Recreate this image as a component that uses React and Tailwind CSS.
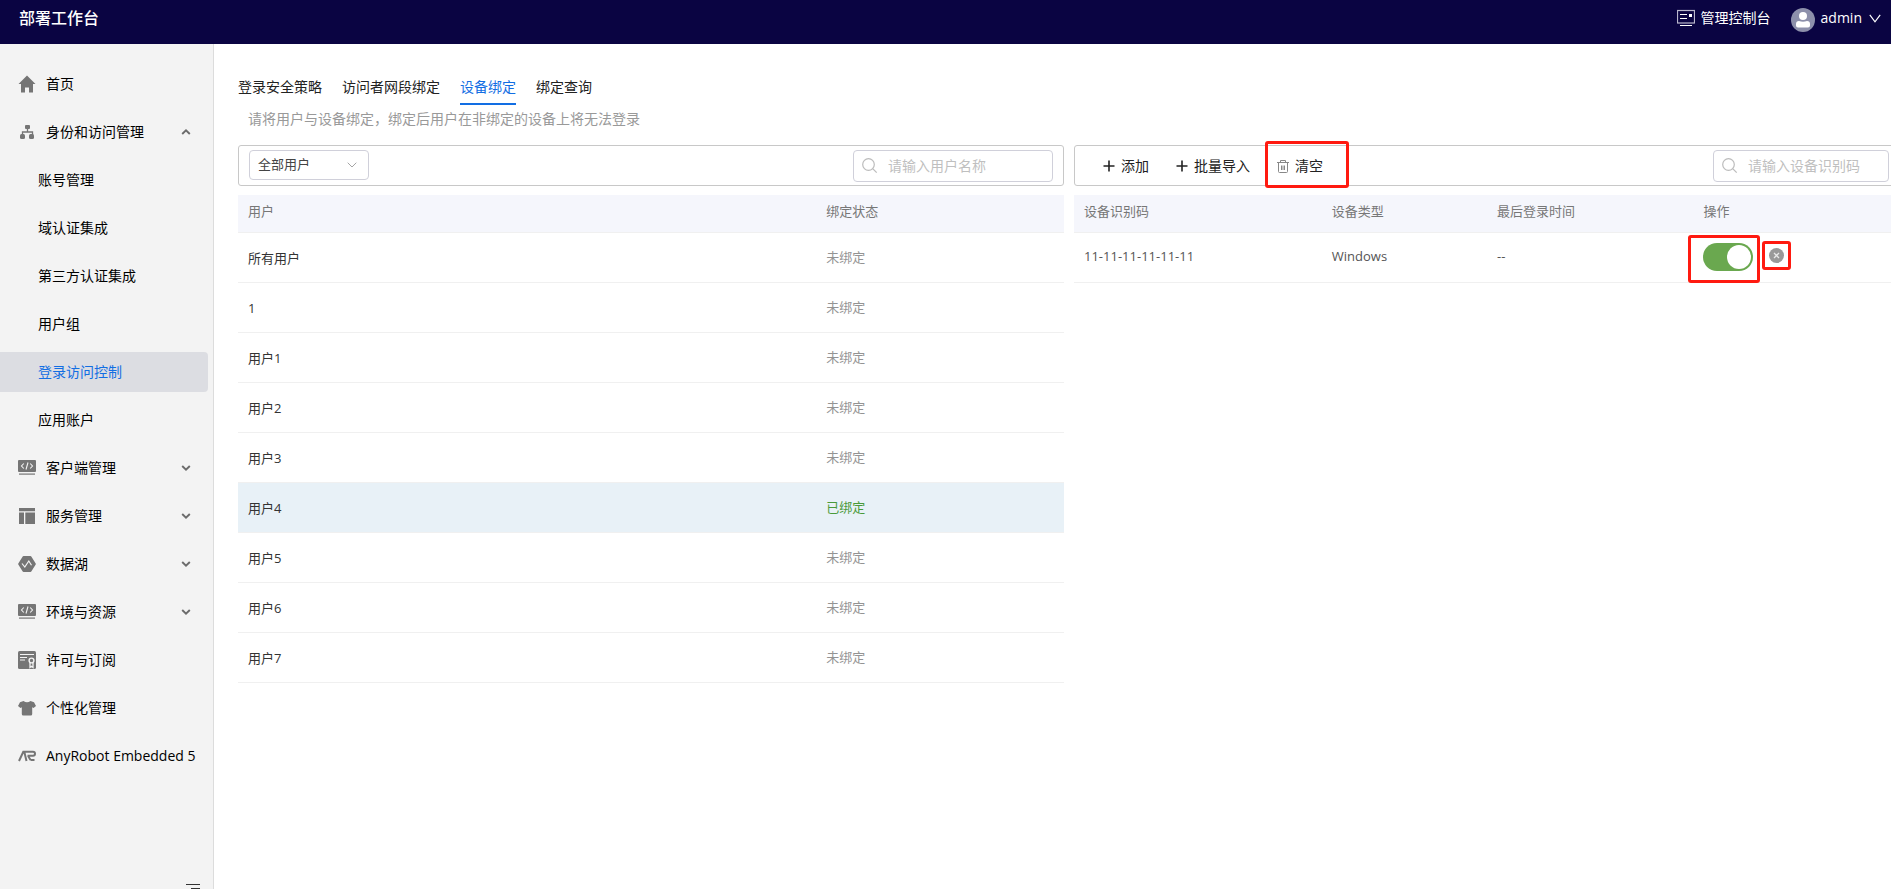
import React, { useState } from "react";

const HomeIcon = () => (
  <svg viewBox="0 0 18 18" className="size-[18px]" fill="currentColor">
    <path d="M9 0.5 0.5 9H3v8.500h4v-5h4v5h4V9h2.500z" />
  </svg>
);

const OrgIcon = () => (
  <svg viewBox="0 0 18 18" className="size-[18px]" fill="currentColor">
    <rect x="7" y="2" width="5" height="4" rx="1" />
    <rect x="2" y="11" width="5" height="5" rx="1.500" />
    <rect x="11" y="11" width="5" height="5" rx="1.500" />
    <path d="M9.500 5v4M4.500 12V9h10v3" fill="none" stroke="currentColor" strokeWidth="1.300" />
  </svg>
);

const CodeIcon = () => (
  <svg viewBox="0 0 18 18" className="size-[18px]">
    <rect x="0" y="1" width="18" height="12" rx="1" fill="currentColor" />
    <rect x="1" y="14.500" width="16" height="1.200" fill="currentColor" />
    <path d="M5.800 4.500 3.500 7l2.300 2.500M12.200 4.500 14.500 7l-2.300 2.500M10 3.500 8 10.500" fill="none" stroke="#f3f3f3" strokeWidth="1.100" />
  </svg>
);

const LayoutIcon = () => (
  <svg viewBox="0 0 18 18" className="size-[18px]" fill="currentColor">
    <path d="M1 1h16v3.200H1zM1 5.500h5V17H1zM7.300 5.500H17V17H7.300z" />
  </svg>
);

const LakeIcon = () => (
  <svg viewBox="0 0 18 18" className="size-[18px]">
    <path d="M5.500 1h7a1 1 0 0 1 .8.500L17.700 8.500a1 1 0 0 1 0 1L13.300 16.500a1 1 0 0 1-.8.500h-7a1 1 0 0 1-.8-.5L.3 9.500a1 1 0 0 1 0-1L4.700 1.500A1 1 0 0 1 5.500 1z" fill="currentColor" />
    <path d="M4 8.500 6.800 12l4-6 2.700 4.200" fill="none" stroke="#f3f3f3" strokeWidth="1.200" />
  </svg>
);

const LicenseIcon = () => (
  <svg viewBox="0 0 18 18" className="size-[18px]">
    <rect width="18" height="18" rx="1.500" fill="currentColor" />
    <path d="M2 3.500h14M2 6.500h7M2 9h5" stroke="#f3f3f3" strokeWidth="1.200" />
    <circle cx="13.500" cy="9.500" r="2.400" fill="none" stroke="#f3f3f3" strokeWidth="1.400" />
    <path d="M12 11.500v5l1.500-1.200 1.500 1.200v-5" fill="none" stroke="#f3f3f3" strokeWidth="1.300" />
  </svg>
);

const ShirtIcon = () => (
  <svg viewBox="0 0 18 18" className="size-[18px]" fill="currentColor">
    <path d="M5.500 2q3.500 2.600 7 0L16 3.200 18 7l-2.500 2-1.300-.8V15q0 1.500-1.500 1.500H5.300Q3.800 16.500 3.800 15V8.200L2.500 9 0 7l2-3.800z" />
  </svg>
);

const RobotIcon = () => (
  <svg viewBox="0 0 18 18" className="size-[18px]" fill="none" stroke="currentColor" strokeWidth="2">
    <path d="M1 14 5.300 4.800h1L8.500 14M7 4.800h8q2 0 2 2t-2 2h-5.500M12.500 13h4M10 8.800l2.500 4.200" />
  </svg>
);

const Chevron = ({ up }) => (
  <svg viewBox="0 0 10 8" className="w-[10px] h-2" fill="none" stroke="#6b6b6b" strokeWidth="1.900">
    <path d={up ? "M1.200 6 5 2.300 8.800 6" : "M1.200 2 5 5.700 8.800 2"} />
  </svg>
);

const SearchIcon = () => (
  <svg viewBox="0 0 16 16" className="size-4 shrink-0" fill="none" stroke="#bcbcbc" strokeWidth="1.200">
    <circle cx="6.500" cy="6.500" r="5.800" />
    <path d="m10.700 10.700 4 4" />
  </svg>
);

const PlusIcon = () => (
  <svg viewBox="0 0 12 12" className="size-3" fill="none" stroke="#222" strokeWidth="1.600">
    <path d="M6 .5v11M.5 6h11" />
  </svg>
);

const TrashIcon = () => (
  <svg viewBox="0 0 12 14" className="w-3 h-[14px]" fill="none" stroke="#888" strokeWidth="1">
    <path d="M0 3.500h12M3.500 3V1.500h5V3M1.500 4v8.500q0 1 1 1h7q1 0 1-1V4M4.500 6.500v4.500M6 6.500v4.500M7.500 6.500v4.500" />
  </svg>
);

const menu = [
  { label: "首页", icon: HomeIcon },
  {
    label: "身份和访问管理",
    icon: OrgIcon,
    open: true,
    children: ["账号管理", "域认证集成", "第三方认证集成", "用户组", "登录访问控制", "应用账户"],
  },
  { label: "客户端管理", icon: CodeIcon, children: [] },
  { label: "服务管理", icon: LayoutIcon, children: [] },
  { label: "数据湖", icon: LakeIcon, children: [] },
  { label: "环境与资源", icon: CodeIcon, children: [] },
  { label: "许可与订阅", icon: LicenseIcon },
  { label: "个性化管理", icon: ShirtIcon },
  { label: "AnyRobot Embedded 5", icon: RobotIcon },
];

const tabs = ["登录安全策略", "访问者网段绑定", "设备绑定", "绑定查询"];

const users = [
  { name: "所有用户", bound: false },
  { name: "1", bound: false },
  { name: "用户1", bound: false },
  { name: "用户2", bound: false },
  { name: "用户3", bound: false },
  { name: "用户4", bound: true },
  { name: "用户5", bound: false },
  { name: "用户6", bound: false },
  { name: "用户7", bound: false },
];

function Header() {
  return (
    <header className="flex h-11 shrink-0 items-center justify-between bg-[#0a0442] pl-[19px] pr-[10px] text-white">
      <h1 className="pb-2 text-base font-medium leading-6">部署工作台</h1>
      <div className="flex items-center pb-1 text-sm">
        <a href="#console" className="flex items-center gap-[6px] pb-1 leading-6">
          <svg viewBox="0 0 18 18" className="size-[18px]" fill="none" stroke="currentColor">
            <rect x=".5" y="1.500" width="17" height="12.500" stroke="#b9b7cc" strokeWidth="1.200" />
            <path d="M3 5.500h7M3 9.500h7M3 16.500h12" strokeWidth="1.200" />
            <rect x="12" y="5" width="3" height="3" fill="currentColor" stroke="none" />
          </svg>
          管理控制台
        </a>
        <button type="button" className="ml-5 flex items-center gap-[6px]">
          <svg viewBox="0 0 24 24" className="size-6">
            <circle cx="12" cy="12" r="12" fill="#8d90ab" />
            <circle cx="12" cy="8" r="4" fill="#fff" />
            <path d="M5 16q0-3 3-3 4 1.500 8 0 3 0 3 3v1.500q0 2-2 2H7q-2 0-2-2z" fill="#fff" />
          </svg>
          <span className="flex items-center gap-[7px] pb-1 leading-6">
            admin
            <svg viewBox="0 0 12 9" className="h-[9px] w-3" fill="none" stroke="currentColor" strokeWidth="1.200">
              <path d="M.8 .8 6 7.800 11.200 .8" />
            </svg>
          </span>
        </button>
      </div>
    </header>
  );
}

function Sidebar() {
  const [active, setActive] = useState("登录访问控制");

  return (
    <aside className="flex w-[214px] shrink-0 flex-col border-r border-[#dcdcdc] bg-[#f3f3f3]">
      <nav className="flex min-h-0 flex-1 flex-col gap-2 pr-[5px] pt-5 text-sm text-black">
        {menu.map((item) => (
          <React.Fragment key={item.label}>
            <button type="button" className="flex h-10 shrink-0 items-center gap-[10px] pl-[18px] pr-[17px] text-left">
              <span className="text-[#757575]">
                <item.icon />
              </span>
              <span className="flex-1 whitespace-nowrap">{item.label}</span>
              {item.children && <Chevron up={item.open} />}
            </button>
            {item.open &&
              item.children.map((child) => (
                <a
                  key={child}
                  href="#menu"
                  onClick={() => setActive(child)}
                  className={`flex h-10 shrink-0 items-center rounded-r-sm pl-[38px] ${
                    child === active ? "bg-[#dcdde2] text-[#126ee3]" : ""
                  }`}
                >
                  {child}
                </a>
              ))}
          </React.Fragment>
        ))}
      </nav>
      <button type="button" aria-label="收起菜单" className="mr-3 flex h-[5px] items-start justify-end overflow-hidden">
        <svg viewBox="0 0 16 14" className="h-[14px] w-4 shrink-0" stroke="#333" strokeWidth="1">
          <path d="M1 .5h14M6 4.500h9M6 8.500h9M1 12.500h14" />
        </svg>
      </button>
    </aside>
  );
}

function SearchBox({ placeholder, className }) {
  return (
    <label className={`flex h-8 items-center gap-[10px] rounded border border-[#d0d0da] px-2 ${className}`}>
      <SearchIcon />
      <input
        type="text"
        aria-label={placeholder}
        placeholder={placeholder}
        className="min-w-0 flex-1 text-sm outline-none placeholder:text-[#bfbfbf]"
      />
    </label>
  );
}

function UserPanel() {
  const [selected, setSelected] = useState("用户4");

  return (
    <section className="w-1/2 shrink-0">
      <div className="flex h-[41px] items-start justify-between rounded-[3px] border border-[#c8c8c8] px-[10px] pt-1">
        <div className="relative">
          <select
            aria-label="用户范围"
            className="h-[30px] w-[120px] appearance-none rounded border border-[#d0d0da] bg-white pl-2 text-[13px] text-[#444] outline-none"
          >
            <option>全部用户</option>
          </select>
          <svg viewBox="0 0 10 6" className="pointer-events-none absolute right-3 top-3 h-[6px] w-[10px]" fill="none" stroke="#a5a5a5">
            <path d="M.7 .7 5 5 9.300 .7" />
          </svg>
        </div>
        <SearchBox placeholder="请输入用户名称" className="w-[200px]" />
      </div>

      <table className="mt-[9px] w-full table-fixed text-left text-[13px]">
        <thead className="bg-[#f5f6fc] text-[#777]">
          <tr className="h-[37px] border-b border-[#f0f0f0]">
            <th className="w-[70%] px-[10px] pb-1 font-normal">用户</th>
            <th className="w-[30%] px-[10px] pb-1 font-normal">绑定状态</th>
          </tr>
        </thead>
        <tbody>
          {users.map((user) => (
            <tr
              key={user.name}
              onClick={() => setSelected(user.name)}
              className={`h-[50px] border-b border-[#f0f0f0] ${user.name === selected ? "bg-[#e8f1f7]" : ""}`}
            >
              <td className="px-[10px] pt-[3px] text-[#333]">{user.name}</td>
              <td className={`px-[10px] pt-px ${user.bound ? "text-[#4a9a3a]" : "text-[#949494]"}`}>
                {user.bound ? "已绑定" : "未绑定"}
              </td>
            </tr>
          ))}
        </tbody>
      </table>
    </section>
  );
}

function DevicePanel() {
  const [enabled, setEnabled] = useState(true);

  return (
    <section className="ml-[10px] w-1/2 shrink-0">
      <div className="flex h-[41px] items-start justify-between rounded-[3px] border border-[#c8c8c8] pl-7 pr-[10px] pt-1">
        <div className="flex h-8 items-center text-sm text-[#222]">
          <button type="button" className="flex items-center gap-[6px]">
            <PlusIcon />
            添加
          </button>
          <button type="button" className="ml-[27px] flex items-center gap-[6px]">
            <PlusIcon />
            批量导入
          </button>
          <button type="button" className="relative ml-[27px] flex items-center gap-[6px]">
            <TrashIcon />
            清空
            <span className="absolute -bottom-3 -left-3 -right-[26px] -top-[15px] rounded-[3px] border-3 border-[#ff1a10]"></span>
          </button>
        </div>
        <SearchBox placeholder="请输入设备识别码" className="w-[176px]" />
      </div>

      <table className="mt-[9px] w-full table-fixed text-left text-[13px]">
        <thead className="bg-[#f5f6fc] text-[#777]">
          <tr className="h-[37px] border-b border-[#f0f0f0]">
            <th className="w-[30%] px-[10px] pb-1 font-normal">设备识别码</th>
            <th className="w-[20%] px-[10px] pb-1 font-normal">设备类型</th>
            <th className="w-[25%] px-[10px] pb-1 font-normal">最后登录时间</th>
            <th className="w-[25%] px-[10px] pb-1 font-normal">操作</th>
          </tr>
        </thead>
        <tbody>
          <tr className="h-[50px] border-b border-[#f0f0f0] text-[#555]">
            <td className="px-[10px]">11-11-11-11-11-11</td>
            <td className="px-[10px]">Windows</td>
            <td className="px-[10px]">--</td>
            <td className="px-[10px]">
              <div className="flex items-center gap-4">
                <span className="relative flex">
                  <input
                    type="checkbox"
                    role="switch"
                    aria-label="启用设备绑定"
                    checked={enabled}
                    onChange={(e) => setEnabled(e.target.checked)}
                    className="flex h-7 w-[50px] appearance-none rounded-full bg-[#bbb] p-[2px] before:size-6 before:rounded-full before:bg-white checked:justify-end checked:bg-[#6aa84f]"
                  />
                  <span className="pointer-events-none absolute -bottom-3 -left-[15px] -right-[7px] -top-2 rounded-[3px] border-3 border-[#ff1a10]"></span>
                </span>
                <button type="button" aria-label="删除" className="relative mb-1">
                  <svg viewBox="0 0 15 15" className="size-[15px]">
                    <circle cx="7.500" cy="7.500" r="7.500" fill="#999" />
                    <path d="m5 5 5 5M10 5l-5 5" stroke="#e8e8e8" strokeWidth="1.300" />
                  </svg>
                  <span className="absolute -inset-[7px] rounded-[3px] border-3 border-[#ff1a10]"></span>
                </button>
              </div>
            </td>
          </tr>
        </tbody>
      </table>
    </section>
  );
}

function App() {
  const [tab, setTab] = useState("设备绑定");

  return (
    <div className="flex h-screen flex-col overflow-hidden bg-white font-['Open_Sans','Noto_Sans_CJK_SC',sans-serif]">
      <Header />
      <div className="flex min-h-0 flex-1">
        <Sidebar />
        <main className="min-w-0 flex-1 overflow-hidden pl-6 pr-px pt-[27px]">
          <div className="flex gap-5 text-sm text-[#222]">
            {tabs.map((name) => (
              <button
                key={name}
                type="button"
                onClick={() => setTab(name)}
                className={`h-[34px] border-b-2 ${
                  name === tab ? "border-[#126ee3] text-[#126ee3]" : "border-transparent"
                }`}
              >
                {name}
              </button>
            ))}
          </div>
          <p className="pb-4 pl-[10px] pt-1 text-sm text-[#999]">请将用户与设备绑定，绑定后用户在非绑定的设备上将无法登录</p>
          <div className="flex items-start">
            <UserPanel />
            <DevicePanel />
          </div>
        </main>
      </div>
    </div>
  );
}

export default App;
